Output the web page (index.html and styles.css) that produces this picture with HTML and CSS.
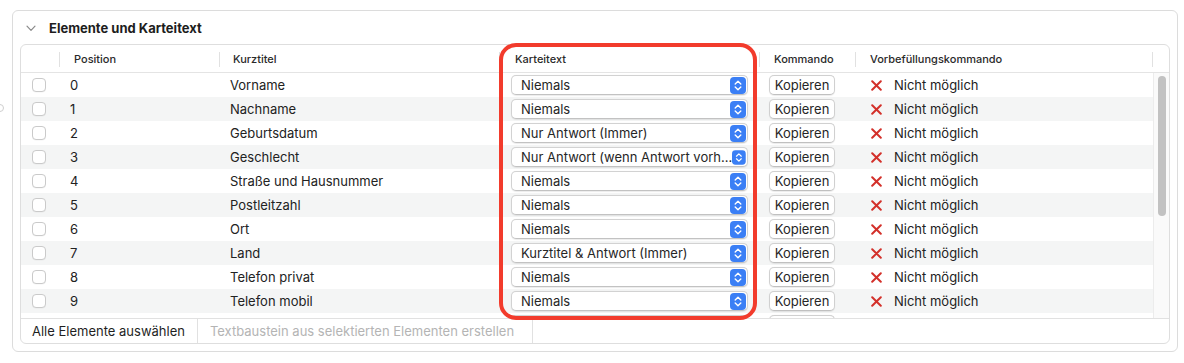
FILE: index.html
```html
<!DOCTYPE html>
<html lang="de">
<head>
  <meta charset="UTF-8">
  <title>Elemente und Karteitext</title>
  <link rel="stylesheet" href="styles.css">
</head>
<body>

<div class="edge-dot"></div>

<!-- Gruppe: Elemente und Karteitext -->
<section class="group">
  <div class="group-title">
    <svg class="disclosure" width="10" height="7" viewBox="0 0 10 7"><path d="M1 1.2 L5 5.4 L9 1.2" fill="none" stroke="#8a8a8a" stroke-width="1.2" stroke-linecap="round" stroke-linejoin="round"/></svg>
    <span>Elemente und Karteitext</span>
  </div>

  <div class="table">
    <div class="thead">
      <div class="cols">
        <div class="th"></div>
        <div class="th sep">Position</div>
        <div class="th sep">Kurztitel</div>
        <div class="th sep">Karteitext</div>
        <div class="th sep">Kommando</div>
        <div class="th sep">Vorbefüllungskommando</div>
      </div>
      <div class="th-scroll sep"></div>
    </div>

    <div class="tbody">
      <div class="rows" id="rows"></div>
      <div class="scrollbar"><div class="thumb"></div></div>
    </div>

    <div class="tfoot">
      <div class="foot-btn">Alle Elemente auswählen</div>
      <div class="foot-btn disabled">Textbaustein aus selektierten Elementen erstellen</div>
    </div>
  </div>
</section>

<!-- Markierung -->
<div class="highlight"></div>

<script>
  var items = [
    ['0', 'Vorname', 'Niemals'],
    ['1', 'Nachname', 'Niemals'],
    ['2', 'Geburtsdatum', 'Nur Antwort (Immer)'],
    ['3', 'Geschlecht', 'Nur Antwort (wenn Antwort vorh…'],
    ['4', 'Straße und Hausnummer', 'Niemals'],
    ['5', 'Postleitzahl', 'Niemals'],
    ['6', 'Ort', 'Niemals'],
    ['7', 'Land', 'Kurztitel & Antwort (Immer)'],
    ['8', 'Telefon privat', 'Niemals'],
    ['9', 'Telefon mobil', 'Niemals']
  ];

  var stepper = '<svg width="16" height="17" viewBox="0 0 16 17"><rect width="16" height="17" rx="4" fill="#3b7ff5"/>' +
    '<path d="M5.2 7 L8 4.3 L10.8 7" fill="none" stroke="#fff" stroke-width="1.4" stroke-linecap="round" stroke-linejoin="round"/>' +
    '<path d="M5.2 10 L8 12.7 L10.8 10" fill="none" stroke="#fff" stroke-width="1.4" stroke-linecap="round" stroke-linejoin="round"/></svg>';

  var cross = '<svg width="11" height="11" viewBox="0 0 11 11"><path d="M1.2 1.2 L9.8 9.8 M9.8 1.2 L1.2 9.8" stroke="#d3302a" stroke-width="2" stroke-linecap="round"/></svg>';

  var html = '';
  items.forEach(function (it, i) {
    html += '<div class="row' + (i % 2 ? ' alt' : '') + '">' +
      '<div class="td"><span class="checkbox"></span></div>' +
      '<div class="td">' + it[0] + '</div>' +
      '<div class="td">' + it[1] + '</div>' +
      '<div class="td"><div class="select"><span class="select-label">' + it[2] + '</span>' + stepper + '</div></div>' +
      '<div class="td"><div class="button">Kopieren</div></div>' +
      '<div class="td"><span class="cross">' + cross + '</span>Nicht möglich</div>' +
      '</div>';
  });

  // next row is scrolled out of view, only the control edges peek through
  html += '<div class="row">' +
    '<div class="td"></div><div class="td"></div><div class="td"></div>' +
    '<div class="td"><div class="select"></div></div>' +
    '<div class="td"><div class="button"></div></div>' +
    '<div class="td"></div></div>';

  document.getElementById('rows').innerHTML = html;
</script>

</body>
</html>
```

FILE: styles.css
```css
/* Basic styles */
body {
  margin: 0;
  padding: 10px 0 0 12px;
  background: #fff;
  font-family: Inter, "Noto Sans", "Liberation Sans", sans-serif;
  color: #222;
  width: 1184px;
  height: 363px;
  overflow: hidden;
  box-sizing: border-box;
  position: relative;
}

.edge-dot {
  position: absolute;
  left: -4px;
  top: 104px;
  width: 6px;
  height: 6px;
  border: 1px solid #cfcfcf;
  border-radius: 50%;
}

/* Group box */
.group {
  width: 1166px;
  height: 342px;
  box-sizing: border-box;
  border: 1px solid #dcdcdc;
  border-radius: 6px;
  padding: 0 7px 7px 7px;
  display: flex;
  flex-direction: column;
}

.group-title {
  height: 33px;
  display: flex;
  align-items: center;
  font-size: 13px;
  font-weight: 700;
  color: #1d1d1d;
  padding-left: 6px;
}

.disclosure {
  margin-right: 13px;
  margin-top: 1px;
}

/* Table */
.table {
  flex: 1;
  border: 1px solid #dedede;
  border-radius: 6px;
  display: flex;
  flex-direction: column;
  overflow: hidden;
}

.thead {
  height: 27px;
  border-bottom: 1px solid #e4e4e4;
  display: flex;
  font-size: 11px;
  font-weight: 500;
  color: #2a2a2a;
}

.cols,
.row {
  display: grid;
  grid-template-columns: 39px 160px 280px 260px 96px 297px;
}

.th {
  display: flex;
  align-items: center;
  padding-left: 14px;
  position: relative;
}

.th:nth-child(3) {
  padding-left: 13px;
}

.th:nth-child(4) {
  padding-left: 15px;
}

.th.sep::before,
.th-scroll.sep::before {
  content: "";
  position: absolute;
  left: -1px;
  top: 7px;
  height: 15px;
  border-left: 1px solid #e1e1e1;
}

.th-scroll {
  width: 16px;
  position: relative;
}

.tbody {
  height: 245px;
  display: flex;
  overflow: hidden;
}

.rows {
  width: 1132px;
}

.row {
  height: 24px;
  font-size: 13px;
}

.row.alt {
  background: #f4f5f5;
}

.td {
  display: flex;
  align-items: center;
  padding-left: 10px;
  white-space: nowrap;
}

.td:first-child {
  padding-left: 11px;
}

.td:nth-child(4) {
  padding-left: 11px;
}

.td:nth-child(5) {
  padding-left: 9px;
}

.td:nth-child(6) {
  padding-left: 15px;
}

.checkbox {
  width: 12px;
  height: 12px;
  border: 1px solid #cacaca;
  border-radius: 4px;
  background: #fff;
  box-shadow: 0 0.5px 0.5px rgba(0, 0, 0, 0.05);
}

/* Popup select */
.select {
  width: 237px;
  height: 20px;
  box-sizing: border-box;
  border: 1px solid #d2d2d2;
  border-bottom-color: #c2c2c2;
  border-radius: 5px;
  background: #fff;
  display: flex;
  align-items: center;
  justify-content: space-between;
  padding: 0 1px 0 9px;
  box-shadow: 0 0.5px 1px rgba(0, 0, 0, 0.08);
}

.select-label {
  color: #262626;
}

.select svg {
  display: block;
}

/* Push button */
.button {
  width: 66px;
  height: 20px;
  box-sizing: border-box;
  border: 1px solid #d0d0d0;
  border-bottom-color: #c0c0c0;
  border-radius: 5px;
  background: #fff;
  display: flex;
  align-items: center;
  justify-content: center;
  color: #262626;
  box-shadow: 0 0.5px 1px rgba(0, 0, 0, 0.08);
}

.cross {
  width: 11px;
  height: 11px;
  margin-right: 12px;
  margin-top: 1px;
}

.cross svg {
  display: block;
}

/* Scrollbar */
.scrollbar {
  width: 15px;
  border-left: 1px solid #ececec;
  background: #fafafa;
  padding-top: 3px;
}

.thumb {
  width: 8px;
  height: 140px;
  margin-left: 4px;
  border-radius: 4px;
  background: #c2c2c2;
}

/* Footer */
.tfoot {
  height: 24px;
  border-top: 1px solid #e1e1e1;
  display: flex;
  font-size: 13px;
}

.foot-btn {
  display: flex;
  align-items: center;
  padding: 0 12px 0 11px;
  border-right: 1px solid #e1e1e1;
  color: #1f1f1f;
}

.foot-btn.disabled {
  color: #b4b4b4;
  padding: 0 18px 0 12px;
}

/* Red annotation frame */
.highlight {
  position: absolute;
  left: 499px;
  top: 43px;
  width: 258px;
  height: 277px;
  box-sizing: border-box;
  border: 4px solid #f23b2c;
  border-radius: 17px;
}
```
